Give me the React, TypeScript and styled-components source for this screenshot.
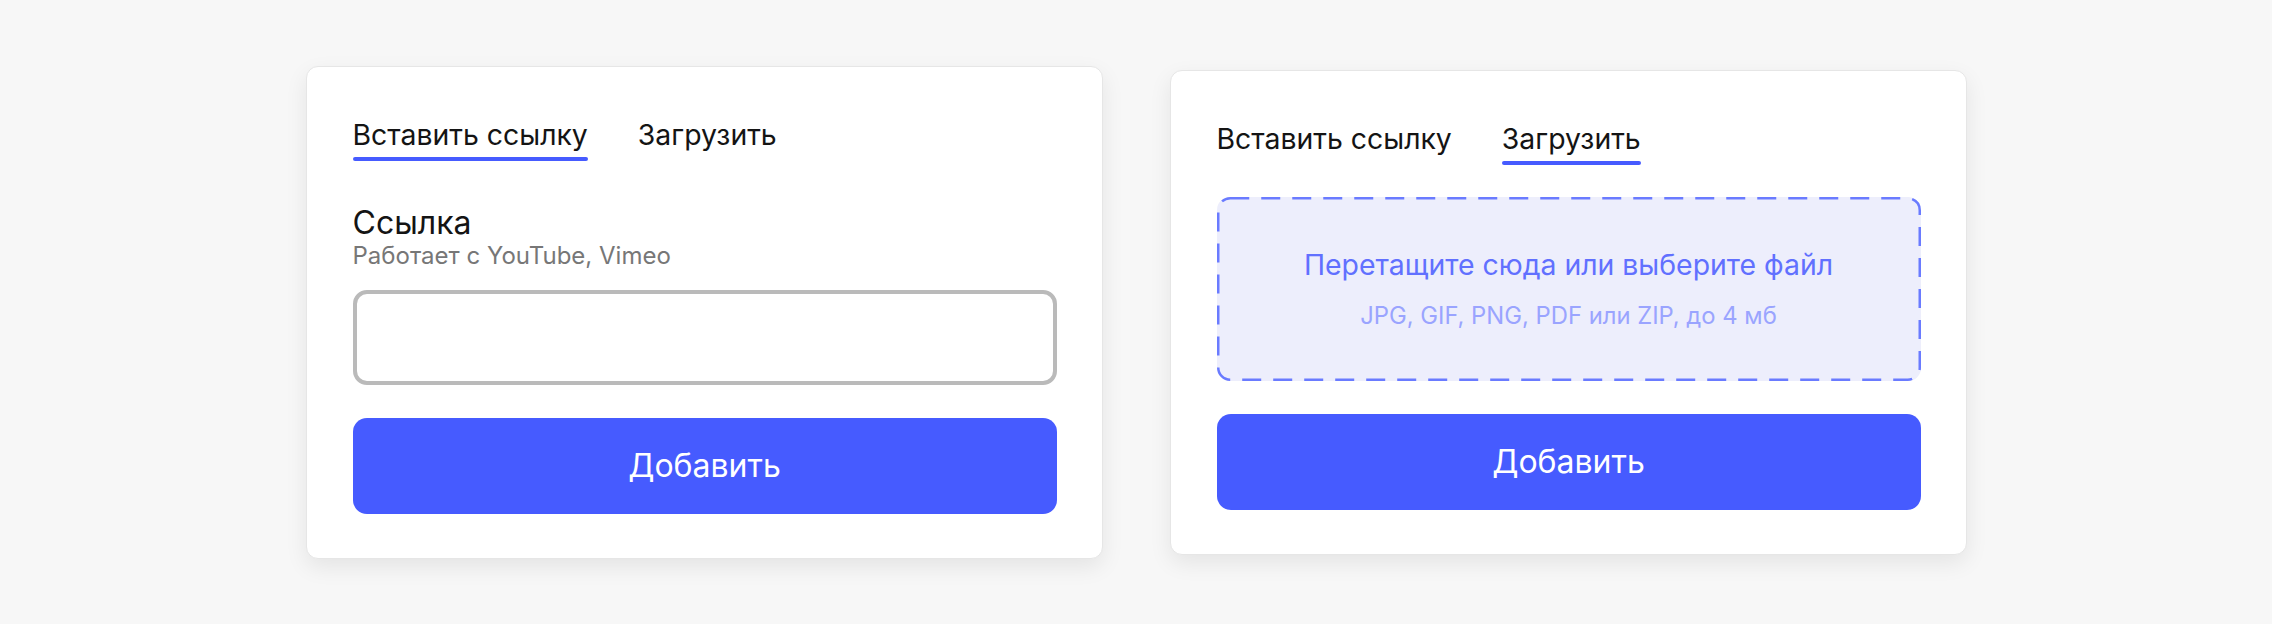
import React, { useState } from "react";
import styled, { createGlobalStyle } from "styled-components";

const GlobalStyle = createGlobalStyle`
  html, body {
    margin: 0;
    padding: 0;
    background: #f7f7f7;
  }
  body {
    font-family: Inter, "Noto Sans", "Liberation Sans", sans-serif;
    -webkit-font-smoothing: antialiased;
  }
  * { box-sizing: border-box; }
`;

const Page = styled.main`
  min-height: 624px;
  display: flex;
  align-items: center;
  justify-content: center;
  gap: 67px;
`;

const Card = styled.section`
  width: 797px;
  background: #ffffff;
  border: 1px solid #e6e6e6;
  border-radius: 12px;
  box-shadow: 0 8px 22px rgba(0, 0, 0, 0.08);
  padding: 51px 45px 44px 46px;
  display: flex;
  flex-direction: column;
`;

const Tabs = styled.nav`
  display: flex;
  gap: 50px;
`;

const Tab = styled.button<{ $active?: boolean }>`
  display: inline-flex;
  flex-direction: column;
  gap: 5px;
  padding: 0;
  border: 0;
  background: none;
  cursor: pointer;
  font-family: inherit;
  font-size: 28.4px;
  line-height: 34px;
  font-weight: 400;
  color: #141414;
  text-align: left;

  &::after {
    content: "";
    display: block;
    height: 4px;
    border-radius: 2px;
    background: ${(p) => (p.$active ? "#465bff" : "transparent")};
  }
`;

const Label = styled.div`
  margin-top: 43px;
  font-size: 32px;
  line-height: 38px;
  color: #141414;
`;

const Hint = styled.div`
  font-size: 24px;
  line-height: 28px;
  color: #777777;
`;

const Input = styled.input`
  margin-top: 20px;
  height: 95px;
  width: 100%;
  border: 4px solid #bababa;
  border-radius: 14px;
  background: #fff;
  font-family: inherit;
  font-size: 24px;
  padding: 0 20px;
  outline: none;
`;

const Button = styled.button<{ $gap?: number }>`
  margin-top: 33px;
  height: 96px;
  width: 100%;
  border: 0;
  border-radius: 14px;
  background: #465bff;
  color: #ffffff;
  font-family: inherit;
  font-size: 32px;
  font-weight: 400;
  cursor: pointer;
`;

const Drop = styled.div`
  position: relative;
  margin-top: 32px;
  height: 184px;
  border-radius: 13px;
  background: #edeefc;
  display: flex;
  flex-direction: column;
  align-items: center;
  justify-content: center;
  gap: 20px;
`;

const DashBorder = styled.svg`
  position: absolute;
  inset: 0;
  width: 100%;
  height: 100%;
  overflow: visible;
  pointer-events: none;
`;

const DropTitle = styled.div`
  font-size: 28.4px;
  line-height: 34px;
  color: #6170ff;
`;

const DropSub = styled.div`
  font-size: 23.8px;
  line-height: 28px;
  color: #9aa4ff;
`;

export default function App() {
  const [tabA, setTabA] = useState(0);
  const [tabB, setTabB] = useState(1);
  return (
    <>
      <GlobalStyle />
      <Page>
        <Card>
          <Tabs>
            <Tab $active={tabA === 0} onClick={() => setTabA(0)}>
              Вставить ссылку
            </Tab>
            <Tab $active={tabA === 1} onClick={() => setTabA(1)}>
              Загрузить
            </Tab>
          </Tabs>
          <Label>Ссылка</Label>
          <Hint>Работает с YouTube, Vimeo</Hint>
          <Input type="text" />
          <Button>Добавить</Button>
        </Card>
        <Card>
          <Tabs>
            <Tab $active={tabB === 0} onClick={() => setTabB(0)}>
              Вставить ссылку
            </Tab>
            <Tab $active={tabB === 1} onClick={() => setTabB(1)}>
              Загрузить
            </Tab>
          </Tabs>
          <Drop>
            <DashBorder>
              <rect
                x="1.25"
                y="1.25"
                width="calc(100% - 2.5px)"
                height="calc(100% - 2.5px)"
                rx="12"
                ry="12"
                fill="none"
                stroke="#6a7bff"
                strokeWidth="2.5"
                strokeDasharray="19 12"
              />
            </DashBorder>
            <DropTitle>Перетащите сюда или выберите файл</DropTitle>
            <DropSub>JPG, GIF, PNG, PDF или ZIP, до 4 мб</DropSub>
          </Drop>
          <Button>Добавить</Button>
        </Card>
      </Page>
    </>
  );
}
